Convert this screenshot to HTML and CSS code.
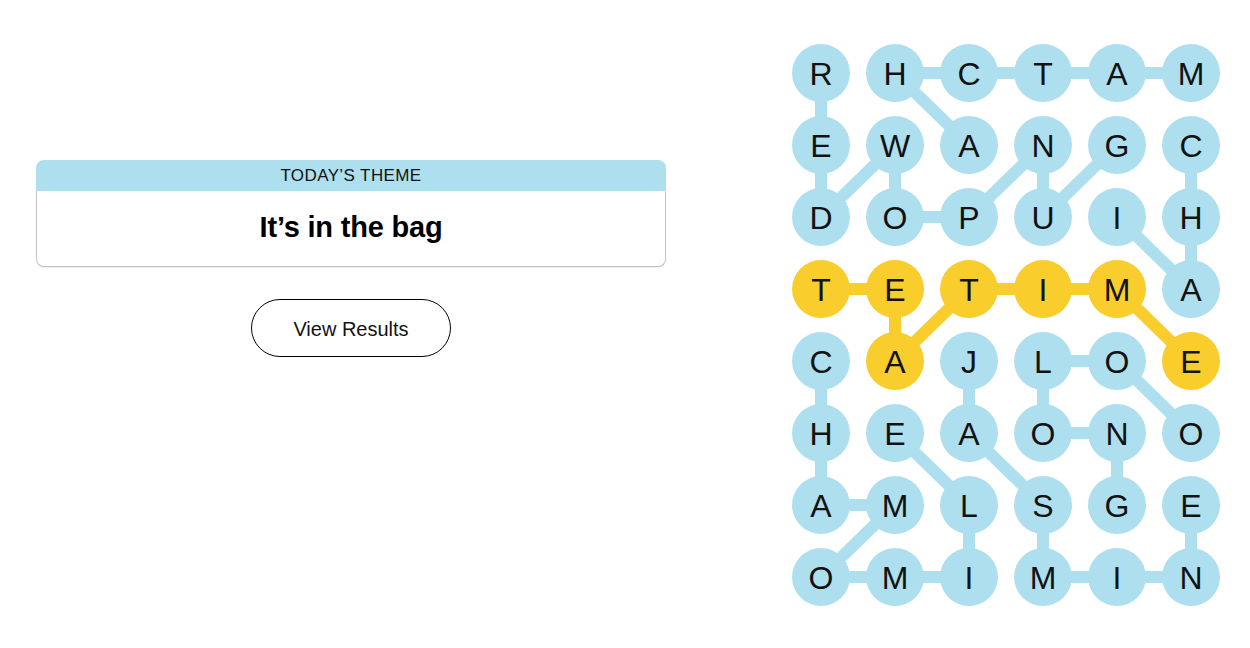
FILE: index.html
```html
<!DOCTYPE html>
<html lang="en">
<head>
<meta charset="utf-8">
<title>Strands</title>
<link rel="stylesheet" href="styles.css">
</head>
<body>
<main class="game">
  <section class="side">
    <div class="theme-card">
      <div class="theme-head">TODAY’S THEME</div>
      <div class="theme-body">It’s in the bag</div>
    </div>
    <button class="results-btn" type="button">View Results</button>
  </section>
  <section class="board">
    <svg class="links" width="428" height="562" viewBox="0 0 428 562" aria-hidden="true">
      <g class="blue">
        <line x1="29" y1="29" x2="29" y2="101"/>
        <line x1="103" y1="29" x2="177" y2="29"/>
        <line x1="177" y1="29" x2="251" y2="29"/>
        <line x1="251" y1="29" x2="325" y2="29"/>
        <line x1="325" y1="29" x2="399" y2="29"/>
        <line x1="103" y1="29" x2="177" y2="101"/>
        <line x1="29" y1="101" x2="29" y2="173"/>
        <line x1="103" y1="101" x2="29" y2="173"/>
        <line x1="103" y1="101" x2="103" y2="173"/>
        <line x1="251" y1="101" x2="177" y2="173"/>
        <line x1="251" y1="101" x2="251" y2="173"/>
        <line x1="325" y1="101" x2="251" y2="173"/>
        <line x1="399" y1="101" x2="399" y2="173"/>
        <line x1="103" y1="173" x2="177" y2="173"/>
        <line x1="325" y1="173" x2="399" y2="245"/>
        <line x1="399" y1="173" x2="399" y2="245"/>
        <line x1="29" y1="317" x2="29" y2="389"/>
        <line x1="177" y1="317" x2="177" y2="389"/>
        <line x1="251" y1="317" x2="325" y2="317"/>
        <line x1="251" y1="317" x2="251" y2="389"/>
        <line x1="325" y1="317" x2="399" y2="389"/>
        <line x1="29" y1="389" x2="29" y2="461"/>
        <line x1="103" y1="389" x2="177" y2="461"/>
        <line x1="177" y1="389" x2="251" y2="461"/>
        <line x1="251" y1="389" x2="325" y2="389"/>
        <line x1="325" y1="389" x2="325" y2="461"/>
        <line x1="29" y1="461" x2="103" y2="461"/>
        <line x1="103" y1="461" x2="29" y2="533"/>
        <line x1="177" y1="461" x2="177" y2="533"/>
        <line x1="251" y1="461" x2="251" y2="533"/>
        <line x1="399" y1="461" x2="399" y2="533"/>
        <line x1="29" y1="533" x2="103" y2="533"/>
        <line x1="103" y1="533" x2="177" y2="533"/>
        <line x1="251" y1="533" x2="325" y2="533"/>
        <line x1="325" y1="533" x2="399" y2="533"/>
      </g>
      <g class="gold">
        <line x1="29" y1="245" x2="103" y2="245"/>
        <line x1="103" y1="245" x2="103" y2="317"/>
        <line x1="103" y1="317" x2="177" y2="245"/>
        <line x1="177" y1="245" x2="251" y2="245"/>
        <line x1="251" y1="245" x2="325" y2="245"/>
        <line x1="325" y1="245" x2="399" y2="317"/>
      </g>
    </svg>
    <div class="grid">
      <span class="cell">R</span><span class="cell">H</span><span class="cell">C</span><span class="cell">T</span><span class="cell">A</span><span class="cell">M</span>
      <span class="cell">E</span><span class="cell">W</span><span class="cell">A</span><span class="cell">N</span><span class="cell">G</span><span class="cell">C</span>
      <span class="cell">D</span><span class="cell">O</span><span class="cell">P</span><span class="cell">U</span><span class="cell">I</span><span class="cell">H</span>
      <span class="cell span">T</span><span class="cell span">E</span><span class="cell span">T</span><span class="cell span">I</span><span class="cell span">M</span><span class="cell">A</span>
      <span class="cell">C</span><span class="cell span">A</span><span class="cell">J</span><span class="cell">L</span><span class="cell">O</span><span class="cell span">E</span>
      <span class="cell">H</span><span class="cell">E</span><span class="cell">A</span><span class="cell">O</span><span class="cell">N</span><span class="cell">O</span>
      <span class="cell">A</span><span class="cell">M</span><span class="cell">L</span><span class="cell">S</span><span class="cell">G</span><span class="cell">E</span>
      <span class="cell">O</span><span class="cell">M</span><span class="cell">I</span><span class="cell">M</span><span class="cell">I</span><span class="cell">N</span>
    </div>
  </section>
</main>
</body>
</html>
```

FILE: styles.css
```css
* { box-sizing: border-box; }

html, body {
  margin: 0;
  padding: 0;
  background: #ffffff;
  color: #000000;
  font-family: "Liberation Sans", Arial, sans-serif;
}

.game {
  display: flex;
  align-items: flex-start;
  width: 1250px;
  height: 648px;
  padding: 44px 0 0 36px;
}

.side {
  width: 630px;
  margin-top: 116px;
  display: flex;
  flex-direction: column;
  align-items: center;
}

.theme-card {
  width: 630px;
  border-radius: 8px;
  box-shadow: 0 1px 1px rgba(0, 0, 0, 0.08);
}

.theme-head {
  background: #aedfee;
  height: 31px;
  border-radius: 8px 8px 0 0;
  display: flex;
  align-items: center;
  justify-content: center;
  font-family: "Liberation Sans", sans-serif;
  font-size: 17px;
  letter-spacing: 0.4px;
  color: #121212;
  padding-top: 1px;
}

.theme-body {
  height: 76px;
  border: 1px solid #c4c4c4;
  border-top: 0;
  border-radius: 0 0 8px 8px;
  display: flex;
  align-items: center;
  justify-content: center;
  font-family: "Liberation Sans", sans-serif;
  font-weight: 700;
  font-size: 29px;
  letter-spacing: -0.2px;
  color: #000;
  padding-bottom: 2px;
}

.results-btn {
  margin-top: 32px;
  width: 200px;
  height: 58px;
  border: 1px solid #000;
  border-radius: 29px;
  background: #fff;
  font-family: "Liberation Sans", sans-serif;
  font-size: 20px;
  color: #121212;
  padding: 3px 0 0;
}

.board {
  position: relative;
  margin-left: 126px;
  width: 428px;
  height: 562px;
}

.links {
  position: absolute;
  left: 0;
  top: 0;
}

.links line {
  stroke-width: 12;
  stroke-linecap: round;
}

.links .blue line { stroke: #aedfee; }
.links .gold line { stroke: #f8cd2c; }

.grid {
  position: relative;
  display: grid;
  grid-template-columns: repeat(6, 58px);
  grid-auto-rows: 58px;
  column-gap: 16px;
  row-gap: 14px;
}

.cell {
  width: 58px;
  height: 58px;
  border-radius: 50%;
  background: #aedfee;
  display: flex;
  align-items: center;
  justify-content: center;
  font-family: "Liberation Sans", sans-serif;
  font-size: 32px;
  color: #121212;
  padding-top: 3px;
}

.cell.span { background: #f8cd2c; }
```
